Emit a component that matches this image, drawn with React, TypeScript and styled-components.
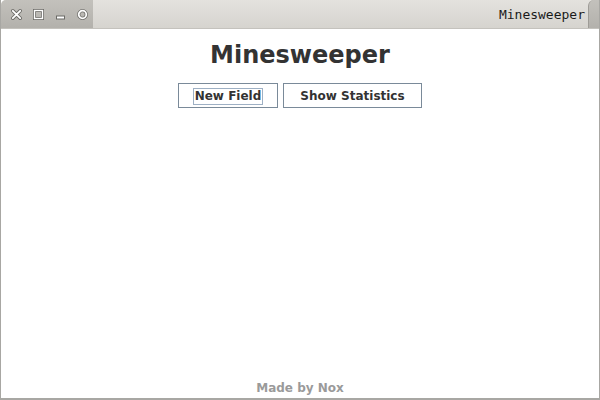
import React from 'react';
import styled, { createGlobalStyle } from 'styled-components';

const Global = createGlobalStyle`
  html, body {
    margin: 0;
    padding: 0;
    background: #ffffff;
  }
`;

const Window = styled.div`
  width: 600px;
  height: 400px;
  box-sizing: border-box;
  display: flex;
  flex-direction: column;
  border-left: 1px solid #a8a7a3;
  border-right: 1px solid #a8a7a3;
  border-bottom: 2px solid #a8a7a3;
  background: #ffffff;
  overflow: hidden;
`;

const TitleBar = styled.div`
  height: 28px;
  flex-shrink: 0;
  display: flex;
  align-items: stretch;
  background: linear-gradient(#e4e2de, #d6d4cf);
  border-bottom: 1px solid #c4c2bd;
  border-top-left-radius: 5px;
`;

const Controls = styled.div`
  width: 92px;
  display: flex;
  align-items: center;
  gap: 9px;
  padding-left: 9px;
  box-sizing: border-box;
  background: linear-gradient(#c3c1bc, #b3b1ac);
  border-top-left-radius: 5px;
`;

const Title = styled.div`
  flex: 1;
  display: flex;
  align-items: center;
  justify-content: flex-end;
  padding-right: 3px;
  font-family: 'DejaVu Sans Mono', monospace;
  font-size: 13px;
  color: #1a1a1a;
`;

const EndTab = styled.div`
  width: 10px;
  background: linear-gradient(#c3c1bc, #b3b1ac);
  border-top-left-radius: 6px;
  border-left: 1px solid #9e9c97;
`;

const Content = styled.div`
  flex: 1;
  display: flex;
  flex-direction: column;
  align-items: center;
`;

const Heading = styled.h1`
  margin: 10px 0 0;
  font-family: 'DejaVu Sans', sans-serif;
  font-weight: bold;
  font-size: 24px;
  line-height: 32px;
  color: #333333;
`;

const ButtonRow = styled.div`
  display: flex;
  gap: 5px;
  margin-top: 12px;
`;

const Button = styled.button<{ $width: number; $focused?: boolean }>`
  width: ${p => p.$width}px;
  height: 25px;
  box-sizing: border-box;
  display: flex;
  align-items: center;
  justify-content: center;
  background: #ffffff;
  border: 1px solid #7a8a99;
  border-radius: 0;
  padding: 1px 0 0;
  font-family: 'DejaVu Sans', sans-serif;
  font-weight: bold;
  font-size: 12px;
  color: #333333;
  span {
    padding: 0 1px;
    line-height: 15px;
    border: 1px solid ${p => (p.$focused ? '#9eb0c4' : 'transparent')};
  }
`;

const Spacer = styled.div`
  flex: 1;
`;

const Footer = styled.div`
  font-family: 'DejaVu Sans', sans-serif;
  font-weight: bold;
  font-size: 12px;
  color: #9a9a9a;
  margin-bottom: 3px;
`;

const Icon: React.FC<{ kind: 'close' | 'max' | 'min' | 'menu' }> = ({ kind }) => (
  <svg width="13" height="13" viewBox="0 0 13 13">
    {kind === 'close' && (
      <g stroke="#6b6a66" strokeWidth="3.6" strokeLinecap="round">
        <path d="M2.8 2.8 L10.2 10.2 M10.2 2.8 L2.8 10.2" />
        <path d="M2.8 2.8 L10.2 10.2 M10.2 2.8 L2.8 10.2" stroke="#ffffff" strokeWidth="1.8" />
      </g>
    )}
    {kind === 'max' && (
      <g fill="none">
        <rect x="2.5" y="2.5" width="8" height="8" stroke="#6b6a66" strokeWidth="3" />
        <rect x="2.5" y="2.5" width="8" height="8" stroke="#ffffff" strokeWidth="1.4" />
      </g>
    )}
    {kind === 'min' && <rect x="2.5" y="8" width="8" height="3" fill="#ffffff" stroke="#6b6a66" strokeWidth="1" />}
    {kind === 'menu' && (
      <g fill="none">
        <circle cx="6.5" cy="6.5" r="3.8" stroke="#6b6a66" strokeWidth="3.2" />
        <circle cx="6.5" cy="6.5" r="3.8" stroke="#ffffff" strokeWidth="1.8" />
      </g>
    )}
  </svg>
);

export default function App() {
  return (
    <>
      <Global />
      <Window>
        <TitleBar>
          <Controls>
            <Icon kind="close" />
            <Icon kind="max" />
            <Icon kind="min" />
            <Icon kind="menu" />
          </Controls>
          <Title>Minesweeper</Title>
          <EndTab />
        </TitleBar>
        <Content>
          <Heading>Minesweeper</Heading>
          <ButtonRow>
            <Button $width={100} $focused>
              <span>New Field</span>
            </Button>
            <Button $width={139}>
              <span>Show Statistics</span>
            </Button>
          </ButtonRow>
          <Spacer />
          <Footer>Made by Nox</Footer>
        </Content>
      </Window>
    </>
  );
}
